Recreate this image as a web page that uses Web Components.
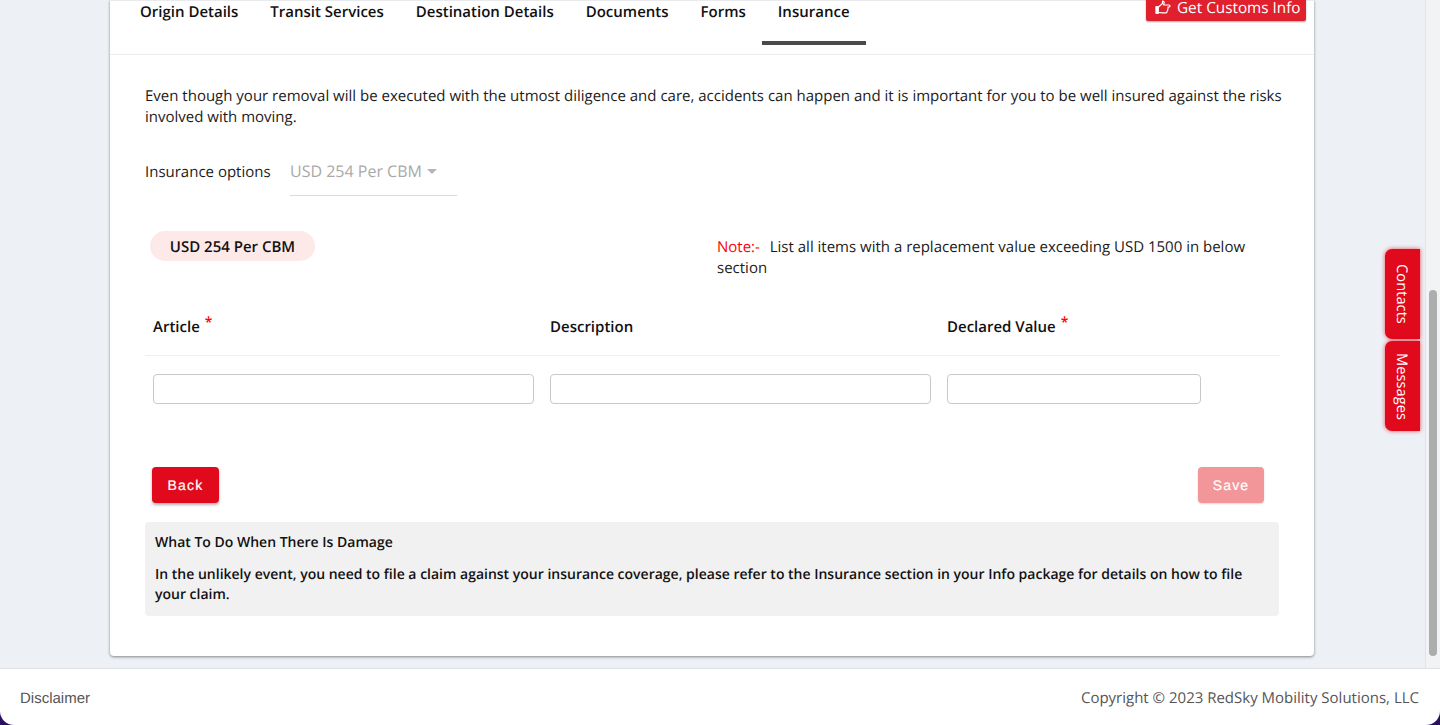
<!DOCTYPE html>
<html lang="en">
<head>
<meta charset="utf-8">
<title>Insurance</title>
<style>
html,body{margin:0;height:725px;overflow:hidden;background:#2a0f63;}
body{font-family:"Open Sans",sans-serif;color:#111;text-rendering:geometricPrecision;}
</style>
</head>
<body>
<app-shell>
  <tab-bar slot="tabs">
    <tab-item>Origin Details</tab-item>
    <tab-item>Transit Services</tab-item>
    <tab-item>Destination Details</tab-item>
    <tab-item>Documents</tab-item>
    <tab-item>Forms</tab-item>
    <tab-item active>Insurance</tab-item>
    <customs-button slot="action">Get Customs Info</customs-button>
  </tab-bar>
  <insurance-form></insurance-form>
  <side-tab slot="side">Contacts</side-tab>
  <side-tab slot="side">Messages</side-tab>
  <app-footer slot="footer"></app-footer>
</app-shell>
<script>
function def(name, html, setup){
  customElements.define(name, class extends HTMLElement{
    constructor(){super();this.attachShadow({mode:'open'}).innerHTML=html;}
    connectedCallback(){if(setup)setup(this);}
  });
}
def('app-shell',`<style>
:host{display:flex;flex-direction:column;width:1440px;height:725px;position:relative;overflow:hidden}
.view{height:668px;background:#edf0f5;position:relative;overflow:hidden;flex:none}
.card{box-sizing:border-box;width:1204px;height:656px;margin:0 0 0 110px;background:#fff;border-radius:0 0 4px 4px;box-shadow:0 1px 3px rgba(0,0,0,.45);position:relative;display:flex;flex-direction:column}
.track{position:absolute;right:0;top:0;bottom:0;width:15px;background:#f2f3f5;border-left:1px solid #e2e3e6;box-sizing:border-box}
.thumb{position:absolute;left:3px;width:8px;top:290px;height:366px;background:#adadad;border-radius:4px}
.sides{position:absolute;left:1385px;top:249px;display:flex;flex-direction:column;gap:2px}
</style>
<div class="view">
  <div class="card"><slot name="tabs"></slot><slot></slot></div>
  <div class="track"><div class="thumb"></div></div>
  <div class="sides"><slot name="side"></slot></div>
</div>
<slot name="footer"></slot>`);
def('tab-bar',`<style>
:host{display:flex;box-sizing:border-box;height:55px;padding-left:14px;border-bottom:1px solid #ebedf2;border-top:1px solid #e8eaee;flex:none;position:relative;justify-content:space-between}
.tabs{display:flex}
.act{align-self:flex-start;margin:-2px 8px 0 0}
</style><div class="tabs"><slot></slot></div><div class="act"><slot name="action"></slot></div>`);
def('tab-item',`<style>
:host{display:block;box-sizing:border-box;height:44px;padding:0 16px;font:600 15px/22px "Open Sans",sans-serif;color:#111;border-bottom:4px solid transparent}
:host([active]){border-bottom-color:#4a4a4a}
</style><slot></slot>`);
def('customs-button',`<style>
:host{display:flex;align-items:center;gap:6px;box-sizing:border-box;width:160px;height:22px;padding:0 0 5px 9px;background:#e0212d;color:#fff;font:400 15.3px/18px "Open Sans",sans-serif;border-radius:0 0 2px 2px;box-shadow:0 1px 2px rgba(0,0,0,.35);white-space:nowrap}
svg{width:16px;height:15px;flex:none}
</style><svg viewBox="0 0 16 15" fill="none" stroke="#fff" stroke-width="1.2" stroke-linejoin="round"><path d="M.8 6.500h2.700v7H.8z" fill="#fff" stroke-width=".8"/><path d="M3.500 7 7.500 3.500V1c1.500 0 2 1 1.500 2.500L8.600 5H14c1.300 0 1.300 2 0 2h-1.500M12.500 7c1 .3 1 1.900-.2 2M12.300 9c.8.400.6 1.800-.4 2M11.900 11c.4.700 0 1.800-1 1.800H7.500L3.500 12.500"/></svg><span><slot></slot></span>`);
def('insurance-form',`<style>
:host{display:flex;flex-direction:column;flex:1;padding:31px 35px 0;box-sizing:border-box;font:400 15px/21px "Open Sans",sans-serif;color:#1b1b1b}
p{margin:0;width:1140px}
.opts{display:flex;margin-top:20px;height:59px}
.opts label{width:145px;padding-top:14px}
.sel{box-sizing:border-box;width:167px;height:48px;border-bottom:1px solid #d9d9d9;padding-top:13px;color:#a9a9a9;font-size:16px;display:flex;align-items:flex-start;gap:5px}
.sel i{width:0;height:0;border:5px solid transparent;border-top-color:#b5b5b5;border-bottom:0;margin-top:8px}
.mid{display:flex;margin-top:24px;height:66px}
.pill{box-sizing:border-box;margin-left:5px;width:165px;height:30px;border-radius:15px;background:#fde9e8;text-align:center;font:600 15px/32px "Open Sans",sans-serif;color:#111}
.note{margin-left:402px;width:540px;padding-top:6px}
.note b{font-weight:400;color:#f00;margin-right:6px}
.head,.row{display:grid;grid-template-columns:397px 397px 341px;padding-left:8px;box-sizing:border-box;width:1135px}
.head{height:59px;border-bottom:1px solid #f0f0f0;font-weight:600;padding-top:20px;color:#111}
.head sup{color:#f00;font-size:14px;line-height:0;font-weight:600;margin-left:1px;vertical-align:5px}
.row{padding-top:18px;height:111px}
input{display:block;box-sizing:border-box;width:381px;height:30px;border:1px solid #c9c9c9;border-radius:4px;background:#fff;padding:0 8px;margin:0;outline:none}
input.s{width:254px}
.btns{display:flex;justify-content:space-between;padding:0 15px 0 7px;height:55px}
.info{box-sizing:border-box;width:1134px;height:94px;background:#f1f1f1;border-radius:4px;padding:11px 10px 9px;font:600 14px/20px "Open Sans",sans-serif;color:#111}
.info div+div{margin-top:12px}
</style>
<p>Even though your removal will be executed with the utmost diligence and care, accidents can happen and it is important for you to be well insured against the risks involved with moving.</p>
<div class="opts"><label>Insurance options</label><div class="sel"><span>USD 254 Per CBM</span><i></i></div></div>
<div class="mid"><div class="pill">USD 254 Per CBM</div><div class="note"><b>Note:-</b> List all items with a replacement value exceeding USD 1500 in below section</div></div>
<div class="head"><div>Article <sup>*</sup></div><div>Description</div><div>Declared Value <sup>*</sup></div></div>
<div class="row"><input aria-label="Article"><input aria-label="Description"><input class="s" aria-label="Declared Value"></div>
<div class="btns"><red-button wide>Back</red-button><red-button disabled>Save</red-button></div>
<div class="info"><div>What To Do When There Is Damage</div><div>In the unlikely event, you need to file a claim against your insurance coverage, please refer to the Insurance section in your Info package for details on how to file your claim.</div></div>`);
def('red-button',`<style>
:host{display:block;box-sizing:border-box;width:66px;height:36px;text-align:center;background:#e00a1c;color:#fff;border-radius:4px;font:400 14px/36px "Liberation Sans",sans-serif;-webkit-text-stroke:.2px #fff;letter-spacing:1.2px;box-shadow:0 2px 3px rgba(0,0,0,.3)}
:host([wide]){width:67px}
:host([disabled]){background:#f29699;box-shadow:0 1px 2px rgba(0,0,0,.15)}
</style><slot></slot>`);
def('side-tab',`<style>
:host{display:flex;align-items:center;justify-content:center;box-sizing:border-box;width:35px;height:90px;padding-right:2px;background:#e00a1c;color:#fff;border-radius:7px 0 0 7px;box-shadow:0 0 4px rgba(224,10,28,.7);writing-mode:vertical-rl;font:400 14.72px/21px "Open Sans",sans-serif}
</style><slot></slot>`);
def('app-footer',`<style>
:host{display:flex;align-items:center;justify-content:space-between;box-sizing:border-box;height:57px;flex:none;background:#fff;border-top:1px solid #dfe1e5;border-radius:0 0 14px 14px;padding:2px 21px 0 20px;color:#555;font:400 15px/21px "Open Sans",sans-serif}
.d{font-family:"Liberation Sans",sans-serif}
</style><span class="d">Disclaimer</span><span>Copyright © 2023 RedSky Mobility Solutions, LLC</span>`);
</script>
</body>
</html>
